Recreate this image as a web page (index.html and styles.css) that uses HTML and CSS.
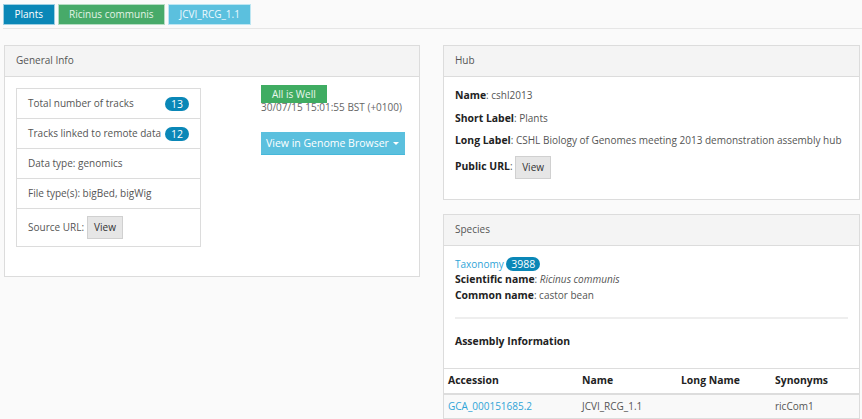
FILE: index.html
```html
<!DOCTYPE html>
<html>
<head>
<meta charset="utf-8">
<link rel="stylesheet" href="styles.css">
</head>
<body>
<div class="crumbs">
  <span class="crumb c-blue">Plants</span>
  <span class="crumb c-green">Ricinus communis</span>
  <span class="crumb c-info">JCVI_RCG_1.1</span>
</div>
<div class="main">
  <div class="col">
    <div class="panel">
      <div class="panel-heading">General Info</div>
      <div class="panel-body gi">
        <ul class="list">
          <li class="item"><span>Total number of tracks</span><span class="badge">13</span></li>
          <li class="item"><span>Tracks linked to remote data</span><span class="badge">12</span></li>
          <li class="item">Data type: genomics</li>
          <li class="item">File type(s): bigBed, bigWig</li>
          <li class="item src">Source URL: <span class="btn-def">View</span></li>
        </ul>
        <div class="status">
          <span class="label-ok">All is Well</span>
          <div class="stamp">30/07/15 15:01:55 BST (+0100)</div>
          <span class="btn-info">View in Genome Browser <span class="caret"></span></span>
        </div>
      </div>
    </div>
  </div>
  <div class="col">
    <div class="panel">
      <div class="panel-heading">Hub</div>
      <div class="panel-body hub">
        <p><b>Name</b>: cshl2013</p>
        <p><b>Short Label</b>: Plants</p>
        <p><b>Long Label</b>: CSHL Biology of Genomes meeting 2013 demonstration assembly hub</p>
        <p><b>Public URL</b>: <span class="btn-def">View</span></p>
      </div>
    </div>
    <div class="panel">
      <div class="panel-heading">Species</div>
      <div class="panel-body species">
        <div><a class="link">Taxonomy</a> <span class="badge">3988</span></div>
        <div><b>Scientific name</b>: <i>Ricinus communis</i></div>
        <div><b>Common name</b>: castor bean</div>
        <hr class="rule">
        <div class="asm"><b>Assembly Information</b></div>
      </div>
      <table class="tbl">
        <thead>
          <tr><th class="w1">Accession</th><th class="w2">Name</th><th class="w3">Long Name</th><th>Synonyms</th></tr>
        </thead>
        <tbody>
          <tr><td><a class="link">GCA_000151685.2</a></td><td>JCVI_RCG_1.1</td><td></td><td>ricCom1</td></tr>
        </tbody>
      </table>
    </div>
  </div>
</div>
</body>
</html>
```
FILE: styles.css
```css
* { box-sizing: border-box; }
body {
  margin: 0;
  background: #fafafa;
  font-family: "Open Sans", "DejaVu Sans", sans-serif;
  font-size: 10px;
  line-height: 15.6px;
  color: #555;
}
.crumbs {
  display: flex;
  gap: 3px;
  padding: 4px 0 3px 0;
  border-bottom: 1px solid #e6e6e6;
  margin: 0 0 0 3px;
}
.crumb {
  display: inline-block;
  height: 21px;
  line-height: 19px;
  padding: 0 10.5px;
  color: #fff;
  border: 1px solid rgba(255,255,255,0.6);
  font-size: 10px;
}
.c-blue { background: #0a87b7; }
.c-green { background: #47aa69; color: #e3f3e6; }
.c-info { background: #5bc0de; color: #eefaff; }
.main {
  display: grid;
  grid-template-columns: 416px 417px;
  column-gap: 23px;
  padding: 16px 0 0 4px;
}
.panel {
  background: #fff;
  border: 1px solid #dcdcdc;
  margin-bottom: 14px;
}
.panel-heading {
  background: #f4f4f4;
  border-bottom: 1px solid #dcdcdc;
  height: 31px;
  padding: 7px 11px;
  font-size: 10px;
  color: #555;
}
.panel-body { padding: 11px; }
.gi {
  display: grid;
  grid-template-columns: 245px auto;
  padding-bottom: 29px;
}
.list {
  list-style: none;
  margin: 0;
  padding: 0;
  width: 185px;
  border: 1px solid #dcdcdc;
}
.item {
  display: flex;
  justify-content: space-between;
  align-items: center;
  height: 30px;
  padding: 0 11px;
  border-top: 1px solid #dcdcdc;
}
.item:first-child { border-top: 0; height: 29px; }
.item.src { justify-content: flex-start; height: 38px; gap: 3px; }
.badge {
  display: inline-block;
  background: #0a87b7;
  color: #fff;
  border-radius: 8px;
  height: 14px;
  line-height: 14px;
  padding: 0 6px;
  font-size: 10.5px;
}
.btn-def {
  display: inline-block;
  background: #e6e6e6;
  border: 1px solid #d0d0d0;
  color: #333;
  height: 23px;
  line-height: 21px;
  padding: 0 6px;
  vertical-align: middle;
}
.status { margin-top: -3px; }
.label-ok {
  display: inline-block;
  background: #3fac62;
  color: #eaf7ee;
  height: 18px;
  line-height: 18px;
  padding: 0 11px;
}
.stamp { margin-top: -3px; color: #666; }
.btn-info {
  display: inline-block;
  margin-top: 16px;
  background: #5bc0de;
  color: #fff;
  height: 23px;
  line-height: 23px;
  padding: 0 6px 0 5px;
  font-size: 10.5px;
  border-bottom: 1px solid #46b8da;
}
.caret {
  display: inline-block;
  width: 0;
  height: 0;
  border-left: 3px solid transparent;
  border-right: 3px solid transparent;
  border-top: 3px solid #fff;
  vertical-align: middle;
  margin-left: 1px;
}
.hub { padding-bottom: 20px; }
.hub p { margin: 0 0 7px; }
.hub p:last-child { margin: 0; }
b { color: #222; font-weight: 700; font-size: 10.4px; }
.link { color: #2fa4d7; }
.species { padding: 11px 11px 19px; }
.species .badge { border-radius: 7px; padding: 0 5px; }
.rule {
  border: 0;
  border-top: 2px solid #eee;
  margin: 13px 0 15px;
}
.tbl {
  width: 100%;
  border-collapse: collapse;
}
.tbl th, .tbl td {
  text-align: left;
  padding: 4px 4px;
  height: 23px;
}
.tbl th {
  color: #222;
  font-weight: 700;
  font-size: 10.4px;
  border-top: 1px solid #ddd;
  border-bottom: 2px solid #ddd;
}
.tbl td { background: #f9f9f9; border-bottom: 1px solid #ddd; }
.w1 { width: 134px; }
.w2 { width: 99px; }
.w3 { width: 94px; }
```
